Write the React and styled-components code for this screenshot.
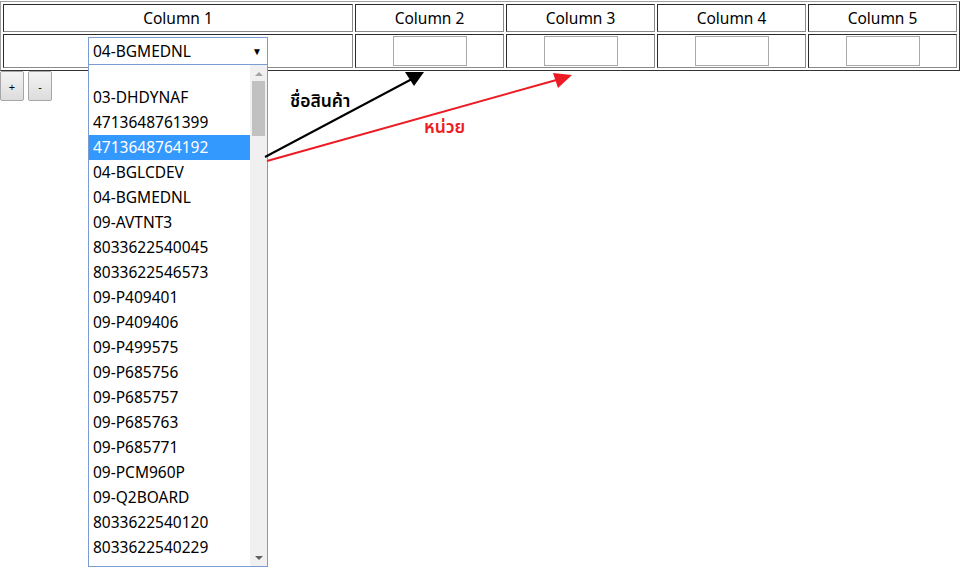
import React from 'react';
import styled, { createGlobalStyle } from 'styled-components';

const GlobalStyle = createGlobalStyle`
  html, body {
    margin: 0;
    padding: 0;
    background: #fff;
  }
  body {
    font-family: "Noto Sans", "Open Sans", sans-serif;
    color: #000;
  }
`;

const Page = styled.div`
  position: relative;
  width: 961px;
  height: 585px;
  overflow: hidden;
  padding-top: 1px;
  box-sizing: border-box;
`;

const Table = styled.table`
  width: 960px;
  border-collapse: separate;
  border-spacing: 2px;
  border-width: 1px;
  border-style: solid;
  border-color: #a0a0a0 #333 #333 #a0a0a0;
  table-layout: fixed;
`;

const Cell = styled.td`
  border-width: 1px;
  border-style: solid;
  border-color: #2b2b2b #8a8a8a #8a8a8a #2b2b2b;
  padding: 0;
  text-align: center;
  height: ${p => (p.$head ? '26px' : '32px')};
  line-height: 20px;
  font-size: 15.5px;
  vertical-align: middle;
  position: relative;
`;

const SelectBox = styled.div`
  position: relative;
  display: inline-flex;
  align-items: center;
  justify-content: space-between;
  vertical-align: middle;
  width: 180px;
  height: 28px;
  box-sizing: border-box;
  border: 1px solid #7a9cd3;
  padding: 0 5px 0 4px;
  margin-top: 0;
  font-size: 15.5px;
  text-align: left;
  background: #fff;
`;

const Caret = styled.span`
  font-size: 10px;
  color: #000;
`;

const TextBox = styled.div`
  display: inline-block;
  vertical-align: middle;
  width: 74px;
  height: 30px;
  box-sizing: border-box;
  border: 1px solid #a9a9a9;
  background: #fff;
`;

const ListPanel = styled.div`
  position: absolute;
  left: -1px;
  top: 26px;
  width: 180px;
  height: 503px;
  box-sizing: border-box;
  border: 1px solid #7a9cd3;
  background: #fff;
  display: flex;
  z-index: 5;
`;

const Options = styled.div`
  flex: 1;
  overflow: hidden;
`;

const Option = styled.div`
  height: ${p => (p.$short ? '20px' : '25px')};
  line-height: 25px;
  padding-left: 4px;
  font-size: 15.5px;
  white-space: nowrap;
  background: ${p => (p.$active ? '#3399ff' : '#fff')};
  color: ${p => (p.$active ? '#fff' : '#000')};
`;

const Scrollbar = styled.div`
  width: 17px;
  background: #f0f0f0;
  display: flex;
  flex-direction: column;
  align-items: center;
`;

const ScrollArrow = styled.div`
  width: 0;
  height: 0;
  border-left: 4px solid transparent;
  border-right: 4px solid transparent;
  ${p =>
    p.$down
      ? 'border-top: 4px solid #606060; margin-top: auto; margin-bottom: 6px;'
      : 'border-bottom: 4px solid #a3a3a3; margin-top: 7px;'}
`;

const Thumb = styled.div`
  width: 13px;
  height: 55px;
  background: #c1c1c1;
  margin-top: 5px;
`;

const ButtonRow = styled.div`
  display: flex;
  gap: 4px;
`;

const SmallButton = styled.button`
  width: 24px;
  height: 30px;
  padding: 0;
  font-family: "Noto Sans", sans-serif;
  font-size: 11px;
  color: #000;
  border: 1px solid #a7a7a7;
  border-radius: 2px;
  background: linear-gradient(#f4f4f4, #dcdcdc);
`;

const Arrows = styled.svg`
  position: absolute;
  left: 0;
  top: 0;
  pointer-events: none;
  z-index: 6;
`;

const Note = styled.span`
  position: absolute;
  left: ${p => p.$x}px;
  top: ${p => p.$y}px;
  font-family: "Noto Sans", "Noto Sans Thai", "Loma", sans-serif;
  font-size: 17.5px;
  font-weight: 600;
  color: ${p => p.$color};
  z-index: 7;
`;

const items = [
  '',
  '03-DHDYNAF',
  '4713648761399',
  '4713648764192',
  '04-BGLCDEV',
  '04-BGMEDNL',
  '09-AVTNT3',
  '8033622540045',
  '8033622546573',
  '09-P409401',
  '09-P409406',
  '09-P499575',
  '09-P685756',
  '09-P685757',
  '09-P685763',
  '09-P685771',
  '09-PCM960P',
  '09-Q2BOARD',
  '8033622540120',
  '8033622540229',
];

export default function App() {
  return (
    <>
      <GlobalStyle />
      <Page>
        <Table>
          <colgroup>
            <col style={{ width: 350 }} />
            <col />
            <col />
            <col />
            <col />
          </colgroup>
          <tbody>
            <tr>
              {[1, 2, 3, 4, 5].map(n => (
                <Cell key={n} $head>Column {n}</Cell>
              ))}
            </tr>
            <tr>
              <Cell>
                <SelectBox>
                  <span>04-BGMEDNL</span>
                  <Caret>▼</Caret>
                  <ListPanel>
                    <Options>
                      {items.map((it, i) => (
                        <Option key={i} $short={i === 0} $active={i === 3}>
                          {it}
                        </Option>
                      ))}
                    </Options>
                    <Scrollbar>
                      <ScrollArrow />
                      <Thumb />
                      <ScrollArrow $down />
                    </Scrollbar>
                  </ListPanel>
                </SelectBox>
              </Cell>
              {[2, 3, 4, 5].map(n => (
                <Cell key={n}>
                  <TextBox />
                </Cell>
              ))}
            </tr>
          </tbody>
        </Table>
        <ButtonRow>
          <SmallButton>+</SmallButton>
          <SmallButton>-</SmallButton>
        </ButtonRow>

        <Arrows width="961" height="585">
          <line x1="265" y1="157" x2="412" y2="79" stroke="#000" strokeWidth="2" />
          <polygon points="424,72 405,72 414,86" fill="#000" />
          <line x1="267" y1="161" x2="560" y2="79" stroke="#ed1c24" strokeWidth="2" />
          <polygon points="572,75 553,73 558,88" fill="#ed1c24" />
        </Arrows>
        <Note $x={290} $y={88} $color="#000">ชื่อสินค้า</Note>
        <Note $x={424} $y={114} $color="#ed1c24">หน่วย</Note>
      </Page>
    </>
  );
}
